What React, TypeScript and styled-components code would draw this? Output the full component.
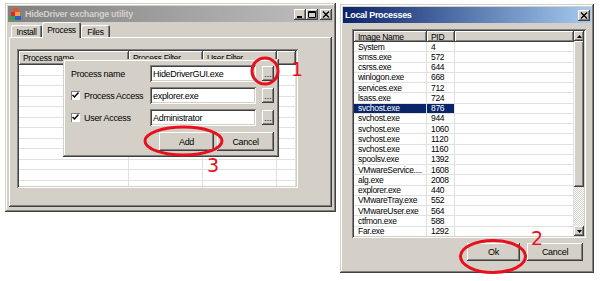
import styled, { createGlobalStyle } from 'styled-components';

const UI_FONT = `"Liberation Sans", Arial, sans-serif`;

const GlobalStyle = createGlobalStyle`
  html, body { margin: 0; padding: 0; background: #fff; }
  body { font-family: ${UI_FONT}; font-size: 8.5px; letter-spacing: -0.3px; color: #000; }
  *, *::before, *::after { box-sizing: border-box; }
`;

const raised = `box-shadow: inset -1px -1px #404040, inset 1px 1px #fff, inset -2px -2px #808080, inset 2px 2px #d4d0c8;`;
const sunken = `box-shadow: inset 1px 1px #808080, inset -1px -1px #fff, inset 2px 2px #404040, inset -2px -2px #d4d0c8;`;

const Desktop = styled.main`
  position: relative;
  width: 600px;
  height: 281px;
  overflow: hidden;
  display: flex;
  align-items: flex-start;
  gap: 4px;
  padding-left: 5px;
  background: #fff;
`;

const Window = styled.section<{ $w: number; $h: number; $top: number }>`
  flex: none;
  width: ${({ $w }) => $w}px;
  height: ${({ $h }) => $h}px;
  margin-top: ${({ $top }) => $top}px;
  padding: 3px;
  display: flex;
  flex-direction: column;
  background: #d4d0c8;
  box-shadow: inset -1px -1px #404040, inset 1px 1px #d4d0c8, inset -2px -2px #808080, inset 2px 2px #fff;
`;

const TitleBar = styled.header<{ $active?: boolean }>`
  flex: none;
  height: 16px;
  display: flex;
  align-items: center;
  gap: 3px;
  padding: 0 1px 0 2px;
  background: ${({ $active }) =>
    $active ? 'linear-gradient(90deg, #0a246a, #a6caf0)' : 'linear-gradient(90deg, #808080, #c0c0c0)'};
  color: ${({ $active }) => ($active ? '#fff' : '#d4d0c8')};
  font-weight: bold;
  font-size: 9px;
`;

const TitleText = styled.span`
  flex: 1;
  white-space: nowrap;
  overflow: hidden;
`;

const CaptionButtons = styled.div`
  display: flex;
  align-items: center;
`;

const CaptionButton = styled.span<{ $apart?: boolean }>`
  width: 12px;
  height: 11px;
  margin-left: ${({ $apart }) => ($apart ? 2 : 0)}px;
  display: grid;
  place-items: center;
  background: #d4d0c8;
  box-shadow: inset -1px -1px #404040, inset 1px 1px #fff, inset -2px -2px #808080;
`;

const TabStrip = styled.nav`
  flex: none;
  height: 15px;
  display: flex;
  align-items: flex-end;
  padding-left: 3px;
  position: relative;
  z-index: 1;
`;

const Tab = styled.span<{ $active?: boolean; $w: number }>`
  width: ${({ $w }) => $w}px;
  height: ${({ $active }) => ($active ? 16 : 12)}px;
  margin-bottom: ${({ $active }) => ($active ? -1 : 0)}px;
  padding-top: ${({ $active }) => ($active ? 0 : 1)}px;
  display: flex;
  align-items: center;
  justify-content: center;
  background: #d4d0c8;
  border-radius: 2px 2px 0 0;
  box-shadow: inset 1px 1px #fff, inset -1px 0 #404040, inset -2px 0 #808080;
`;

const TabPanel = styled.div`
  position: relative;
  flex: 1;
  margin: 0 1px 2px;
  padding: 12px 0 0 8px;
  background: #d4d0c8;
  ${raised}
`;

const ListFrame = styled.div<{ $w: number; $h: number }>`
  width: ${({ $w }) => $w}px;
  height: ${({ $h }) => $h}px;
  padding: 2px;
  display: flex;
  overflow: hidden;
  background: #fff;
  ${sunken}
`;

const ListTable = styled.div`
  flex: 1;
  min-width: 0;
  overflow: hidden;
`;

const HeaderRow = styled.div<{ $cols: string; $h: number }>`
  display: grid;
  grid-template-columns: ${({ $cols }) => $cols};
  height: ${({ $h }) => $h}px;
`;

const HeaderCell = styled.div`
  display: flex;
  align-items: center;
  padding-left: 4px;
  white-space: nowrap;
  overflow: hidden;
  background: #d4d0c8;
  box-shadow: inset -1px -1px #404040, inset 1px 1px #fff, inset -2px -2px #808080;
`;

const Row = styled.div<{ $cols: string; $h: number }>`
  display: grid;
  grid-template-columns: ${({ $cols }) => $cols};
  height: ${({ $h }) => $h}px;
`;

const Cell = styled.div<{ $selected?: boolean }>`
  display: flex;
  align-items: center;
  padding-left: 4px;
  line-height: 10px;
  white-space: nowrap;
  overflow: hidden;
  border-right: 1px solid #e0e0e0;
  border-bottom: 1px solid #e0e0e0;
  background: ${({ $selected }) => ($selected ? '#0a246a' : '#fff')};
  color: ${({ $selected }) => ($selected ? '#fff' : '#000')};
`;

const ScrollBar = styled.div`
  flex: none;
  width: 10px;
  display: flex;
  flex-direction: column;
  background: repeating-conic-gradient(#d4d0c8 0 25%, #fff 0 50%) 0 0 / 2px 2px;
`;

const ScrollArrow = styled.div`
  height: 10px;
  display: grid;
  place-items: center;
  background: #d4d0c8;
  box-shadow: inset -1px -1px #404040, inset 1px 1px #fff, inset -2px -2px #808080;
`;

const ScrollThumb = styled.div<{ $h: number }>`
  height: ${({ $h }) => $h}px;
  background: #d4d0c8;
  box-shadow: inset -1px -1px #404040, inset 1px 1px #fff, inset -2px -2px #808080;
`;

const ScrollTrack = styled.div`
  flex: 1;
`;

const Dialog = styled.div`
  position: absolute;
  left: 54px;
  top: 22px;
  width: 216px;
  height: 98px;
  padding: 6px 5px 6px 8px;
  display: grid;
  grid-template-columns: 73px 106px 12px;
  grid-template-rows: 17px 17px 17px 19px;
  column-gap: 6px;
  row-gap: 5px;
  background: #d4d0c8;
  box-shadow: inset -1px -1px #404040, inset 1px 1px #d4d0c8, inset -2px -2px #808080, inset 2px 2px #fff;
`;

const FieldLabel = styled.label`
  display: flex;
  align-items: center;
  gap: 4px;
  white-space: nowrap;
  font-size: 9px;
`;

const CheckBox = styled.span`
  width: 9px;
  height: 9px;
  flex: none;
  display: grid;
  place-items: center;
  background: #fff;
  box-shadow: inset 1px 1px #808080, inset -1px -1px #fff;
`;

const TextField = styled.div`
  display: flex;
  align-items: center;
  padding-left: 3px;
  white-space: nowrap;
  overflow: hidden;
  background: #fff;
  font-size: 9px;
  ${sunken}
`;

const Button = styled.button<{ $w: number; $h?: number }>`
  width: ${({ $w }) => $w}px;
  height: ${({ $h }) => $h ?? 19}px;
  padding: 0;
  border: none;
  font: inherit;
  font-size: 9px;
  letter-spacing: -0.3px;
  color: #000;
  background: #d4d0c8;
  ${raised}
`;

const BrowseButton = styled(Button)`
  line-height: 12px;
  align-self: center;
  letter-spacing: 0;
`;

const DialogActions = styled.div`
  grid-column: 1 / -1;
  margin-top: 1px;
  display: flex;
  justify-content: flex-end;
  gap: 3px;
`;

const WindowBody = styled.div`
  flex: 1;
  display: flex;
  flex-direction: column;
  padding: 6px 5px 9px 9px;
`;

const WindowActions = styled.div`
  margin-top: 5px;
  padding-right: 3px;
  display: flex;
  justify-content: flex-end;
  gap: 7px;
`;

const Marks = styled.svg`
  position: absolute;
  inset: 0;
  pointer-events: none;
`;

const Mark = styled.span<{ $x: number; $y: number }>`
  position: absolute;
  left: ${({ $x }) => $x}px;
  top: ${({ $y }) => $y}px;
  font-family: "DejaVu Sans", sans-serif;
  font-size: 19px;
  letter-spacing: 0;
  line-height: 1;
  color: #e8101c;
`;

function AppIcon() {
  return (
    <svg width="12" height="12" viewBox="0 0 12 12">
      <rect x="3" y="0" width="6" height="4" fill="#e4572e" />
      <rect x="1" y="4" width="4" height="4" fill="#d62c2c" />
      <rect x="5" y="4" width="5" height="4" fill="#f0a050" />
      <rect x="0" y="8" width="5" height="4" fill="#3aa04a" />
      <rect x="5" y="8" width="6" height="4" fill="#2b5fc2" />
    </svg>
  );
}

function Glyph({ kind }: { kind: 'min' | 'max' | 'close' }) {
  return (
    <svg width="8" height="7" viewBox="0 0 8 7">
      {kind === 'min' && <rect x="1" y="5" width="5" height="2" fill="#000" />}
      {kind === 'max' && (
        <path d="M0.5 0.5h7v6h-7z M0.5 1.5h7" fill="none" stroke="#000" strokeWidth="1" />
      )}
      {kind === 'close' && (
        <path d="M1 0.5l6 6M7 0.5l-6 6" stroke="#000" strokeWidth="1.4" />
      )}
    </svg>
  );
}

function Arrow({ up }: { up?: boolean }) {
  return (
    <svg width="5" height="3" viewBox="0 0 5 3">
      <path d={up ? 'M2.5 0L5 3H0z' : 'M0 0h5L2.5 3z'} fill="#000" />
    </svg>
  );
}

function Check() {
  return (
    <svg width="7" height="7" viewBox="0 0 7 7">
      <path d="M0.5 3l2 2 4-4.5" fill="none" stroke="#000" strokeWidth="1.5" />
    </svg>
  );
}

const leftCols = '110px 74px 74px 1fr';
const rightCols = '73px 28px 1fr';

const processes: [string, string][] = [
  ['System', '4'],
  ['smss.exe', '572'],
  ['csrss.exe', '644'],
  ['winlogon.exe', '668'],
  ['services.exe', '712'],
  ['lsass.exe', '724'],
  ['svchost.exe', '876'],
  ['svchost.exe', '944'],
  ['svchost.exe', '1060'],
  ['svchost.exe', '1120'],
  ['svchost.exe', '1160'],
  ['spoolsv.exe', '1392'],
  ['VMwareService....', '1608'],
  ['alg.exe', '2008'],
  ['explorer.exe', '440'],
  ['VMwareTray.exe', '552'],
  ['VMwareUser.exe', '564'],
  ['ctfmon.exe', '588'],
  ['Far.exe', '1292'],
];

export default function App() {
  return (
    <Desktop>
      <GlobalStyle />

      <Window $w={331} $h={209} $top={3}>
        <TitleBar>
          <AppIcon />
          <TitleText>HideDriver exchange utility</TitleText>
          <CaptionButtons>
            <CaptionButton><Glyph kind="min" /></CaptionButton>
            <CaptionButton><Glyph kind="max" /></CaptionButton>
            <CaptionButton $apart><Glyph kind="close" /></CaptionButton>
          </CaptionButtons>
        </TitleBar>
        <TabStrip>
          <Tab $w={31}>Install</Tab>
          <Tab $w={39} $active>Process</Tab>
          <Tab $w={29}>Files</Tab>
        </TabStrip>
        <TabPanel>
          <ListFrame $w={281} $h={139}>
            <ListTable>
              <HeaderRow $cols={leftCols} $h={14}>
                <HeaderCell>Process name</HeaderCell>
                <HeaderCell>Process Filter</HeaderCell>
                <HeaderCell>User Filter</HeaderCell>
                <HeaderCell />
              </HeaderRow>
              {Array.from({ length: 12 }, (_, i) => (
                <Row key={i} $cols={leftCols} $h={10.5}>
                  <Cell />
                  <Cell />
                  <Cell />
                  <Cell />
                </Row>
              ))}
            </ListTable>
          </ListFrame>

          <Dialog>
            <FieldLabel>Process name</FieldLabel>
            <TextField>HideDriverGUI.exe</TextField>
            <BrowseButton $w={12} $h={15}>...</BrowseButton>

            <FieldLabel>
              <CheckBox><Check /></CheckBox>
              Process Access
            </FieldLabel>
            <TextField>explorer.exe</TextField>
            <BrowseButton $w={12} $h={15}>...</BrowseButton>

            <FieldLabel>
              <CheckBox><Check /></CheckBox>
              User Access
            </FieldLabel>
            <TextField>Administrator</TextField>
            <BrowseButton $w={12} $h={15}>...</BrowseButton>

            <DialogActions>
              <Button $w={55}>Add</Button>
              <Button $w={57}>Cancel</Button>
            </DialogActions>
          </Dialog>
        </TabPanel>
      </Window>

      <Window $w={254} $h={269} $top={4}>
        <TitleBar $active>
          <TitleText>Local Processes</TitleText>
          <CaptionButtons>
            <CaptionButton><Glyph kind="close" /></CaptionButton>
          </CaptionButtons>
        </TitleBar>
        <WindowBody>
          <ListFrame $w={234} $h={209}>
            <ListTable>
              <HeaderRow $cols={rightCols} $h={11}>
                <HeaderCell>Image Name</HeaderCell>
                <HeaderCell>PID</HeaderCell>
                <HeaderCell />
              </HeaderRow>
              {processes.map(([name, pid], i) => {
                const selected = pid === '876';
                return (
                  <Row key={i} $cols={rightCols} $h={10.25}>
                    <Cell $selected={selected}>{name}</Cell>
                    <Cell $selected={selected}>{pid}</Cell>
                    <Cell />
                  </Row>
                );
              })}
            </ListTable>
            <ScrollBar>
              <ScrollArrow><Arrow up /></ScrollArrow>
              <ScrollThumb $h={146} />
              <ScrollTrack />
              <ScrollArrow><Arrow /></ScrollArrow>
            </ScrollBar>
          </ListFrame>
          <WindowActions>
            <Button $w={53} $h={18}>Ok</Button>
            <Button $w={56} $h={18}>Cancel</Button>
          </WindowActions>
        </WindowBody>
      </Window>

      <Marks width="600" height="281" viewBox="0 0 600 281">
        <ellipse cx="265" cy="71" rx="13" ry="13" fill="none" stroke="#e8101c" strokeWidth="3" />
        <ellipse cx="183.5" cy="141" rx="38.5" ry="14" fill="none" stroke="#e8101c" strokeWidth="3" />
        <ellipse cx="493" cy="256.5" rx="32.5" ry="16" fill="none" stroke="#e8101c" strokeWidth="3" />
      </Marks>
      <Mark $x={291} $y={60}>1</Mark>
      <Mark $x={531} $y={229}>2</Mark>
      <Mark $x={207} $y={156}>3</Mark>
    </Desktop>
  );
}
